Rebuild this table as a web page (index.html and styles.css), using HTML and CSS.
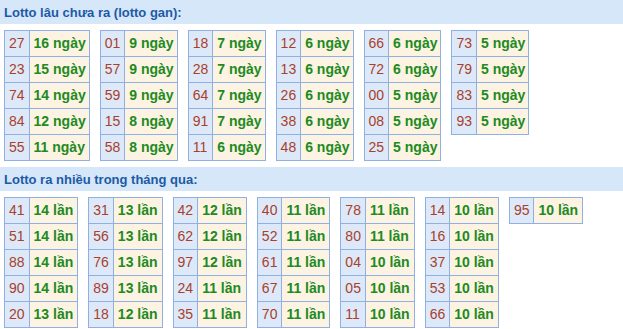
FILE: index.html
```html
<!DOCTYPE html>
<html lang="vi">
<head>
<meta charset="utf-8">
<link rel="stylesheet" href="styles.css">
</head>
<body>
<div class="title">Lotto lâu chưa ra (lotto gan):</div>
<div class="group">
  <table class="lt"><tr><td class="n">27</td><td class="v">16 ngày</td></tr><tr><td class="n">23</td><td class="v">15 ngày</td></tr><tr><td class="n">74</td><td class="v">14 ngày</td></tr><tr><td class="n">84</td><td class="v">12 ngày</td></tr><tr><td class="n">55</td><td class="v">11 ngày</td></tr></table>
  <table class="lt"><tr><td class="n">01</td><td class="v">9 ngày</td></tr><tr><td class="n">57</td><td class="v">9 ngày</td></tr><tr><td class="n">59</td><td class="v">9 ngày</td></tr><tr><td class="n">15</td><td class="v">8 ngày</td></tr><tr><td class="n">58</td><td class="v">8 ngày</td></tr></table>
  <table class="lt"><tr><td class="n">18</td><td class="v">7 ngày</td></tr><tr><td class="n">28</td><td class="v">7 ngày</td></tr><tr><td class="n">64</td><td class="v">7 ngày</td></tr><tr><td class="n">91</td><td class="v">7 ngày</td></tr><tr><td class="n">11</td><td class="v">6 ngày</td></tr></table>
  <table class="lt"><tr><td class="n">12</td><td class="v">6 ngày</td></tr><tr><td class="n">13</td><td class="v">6 ngày</td></tr><tr><td class="n">26</td><td class="v">6 ngày</td></tr><tr><td class="n">38</td><td class="v">6 ngày</td></tr><tr><td class="n">48</td><td class="v">6 ngày</td></tr></table>
  <table class="lt"><tr><td class="n">66</td><td class="v">6 ngày</td></tr><tr><td class="n">72</td><td class="v">6 ngày</td></tr><tr><td class="n">00</td><td class="v">5 ngày</td></tr><tr><td class="n">08</td><td class="v">5 ngày</td></tr><tr><td class="n">25</td><td class="v">5 ngày</td></tr></table>
  <table class="lt"><tr><td class="n">73</td><td class="v">5 ngày</td></tr><tr><td class="n">79</td><td class="v">5 ngày</td></tr><tr><td class="n">83</td><td class="v">5 ngày</td></tr><tr><td class="n">93</td><td class="v">5 ngày</td></tr></table>
</div>
<div class="title">Lotto ra nhiều trong tháng qua:</div>
<div class="group wide">
  <table class="lt"><tr><td class="n">41</td><td class="v">14 lần</td></tr><tr><td class="n">51</td><td class="v">14 lần</td></tr><tr><td class="n">88</td><td class="v">14 lần</td></tr><tr><td class="n">90</td><td class="v">14 lần</td></tr><tr><td class="n">20</td><td class="v">13 lần</td></tr></table>
  <table class="lt"><tr><td class="n">31</td><td class="v">13 lần</td></tr><tr><td class="n">56</td><td class="v">13 lần</td></tr><tr><td class="n">76</td><td class="v">13 lần</td></tr><tr><td class="n">89</td><td class="v">13 lần</td></tr><tr><td class="n">18</td><td class="v">12 lần</td></tr></table>
  <table class="lt"><tr><td class="n">42</td><td class="v">12 lần</td></tr><tr><td class="n">62</td><td class="v">12 lần</td></tr><tr><td class="n">97</td><td class="v">12 lần</td></tr><tr><td class="n">24</td><td class="v">11 lần</td></tr><tr><td class="n">35</td><td class="v">11 lần</td></tr></table>
  <table class="lt"><tr><td class="n">40</td><td class="v">11 lần</td></tr><tr><td class="n">52</td><td class="v">11 lần</td></tr><tr><td class="n">61</td><td class="v">11 lần</td></tr><tr><td class="n">67</td><td class="v">11 lần</td></tr><tr><td class="n">70</td><td class="v">11 lần</td></tr></table>
  <table class="lt"><tr><td class="n">78</td><td class="v">11 lần</td></tr><tr><td class="n">80</td><td class="v">11 lần</td></tr><tr><td class="n">04</td><td class="v">10 lần</td></tr><tr><td class="n">05</td><td class="v">10 lần</td></tr><tr><td class="n">11</td><td class="v">10 lần</td></tr></table>
  <table class="lt"><tr><td class="n">14</td><td class="v">10 lần</td></tr><tr><td class="n">16</td><td class="v">10 lần</td></tr><tr><td class="n">37</td><td class="v">10 lần</td></tr><tr><td class="n">53</td><td class="v">10 lần</td></tr><tr><td class="n">66</td><td class="v">10 lần</td></tr></table>
  <table class="lt"><tr><td class="n">95</td><td class="v">10 lần</td></tr></table>
</div>
</body>
</html>
```
FILE: styles.css
```css
html, body {
  margin: 0;
  padding: 0;
  background: #ffffff;
  font-family: "Liberation Sans", Arial, sans-serif;
}
.title {
  height: 24px;
  line-height: 25px;
  background: #d6e7f9;
  color: #1c5aa6;
  font-size: 13px;
  font-weight: bold;
  padding-left: 4px;
}
.group {
  display: flex;
  align-items: flex-start;
  gap: 10px;
  padding: 6px 4px;
}
.lt {
  border-collapse: collapse;
  font-size: 14px;
}
.lt td {
  border: 1px solid #8fb0e2;
  line-height: 17px;
  padding: 4px 4px;
  white-space: nowrap;
}
.lt td.n {
  background: #dde9f9;
  color: #a8402c;
}
.lt td.v {
  background: #fdf3e3;
  color: #218a1f;
  font-weight: bold;
  padding-right: 3px;
}
.wide .lt td.v {
  padding-right: 4px;
}
```
